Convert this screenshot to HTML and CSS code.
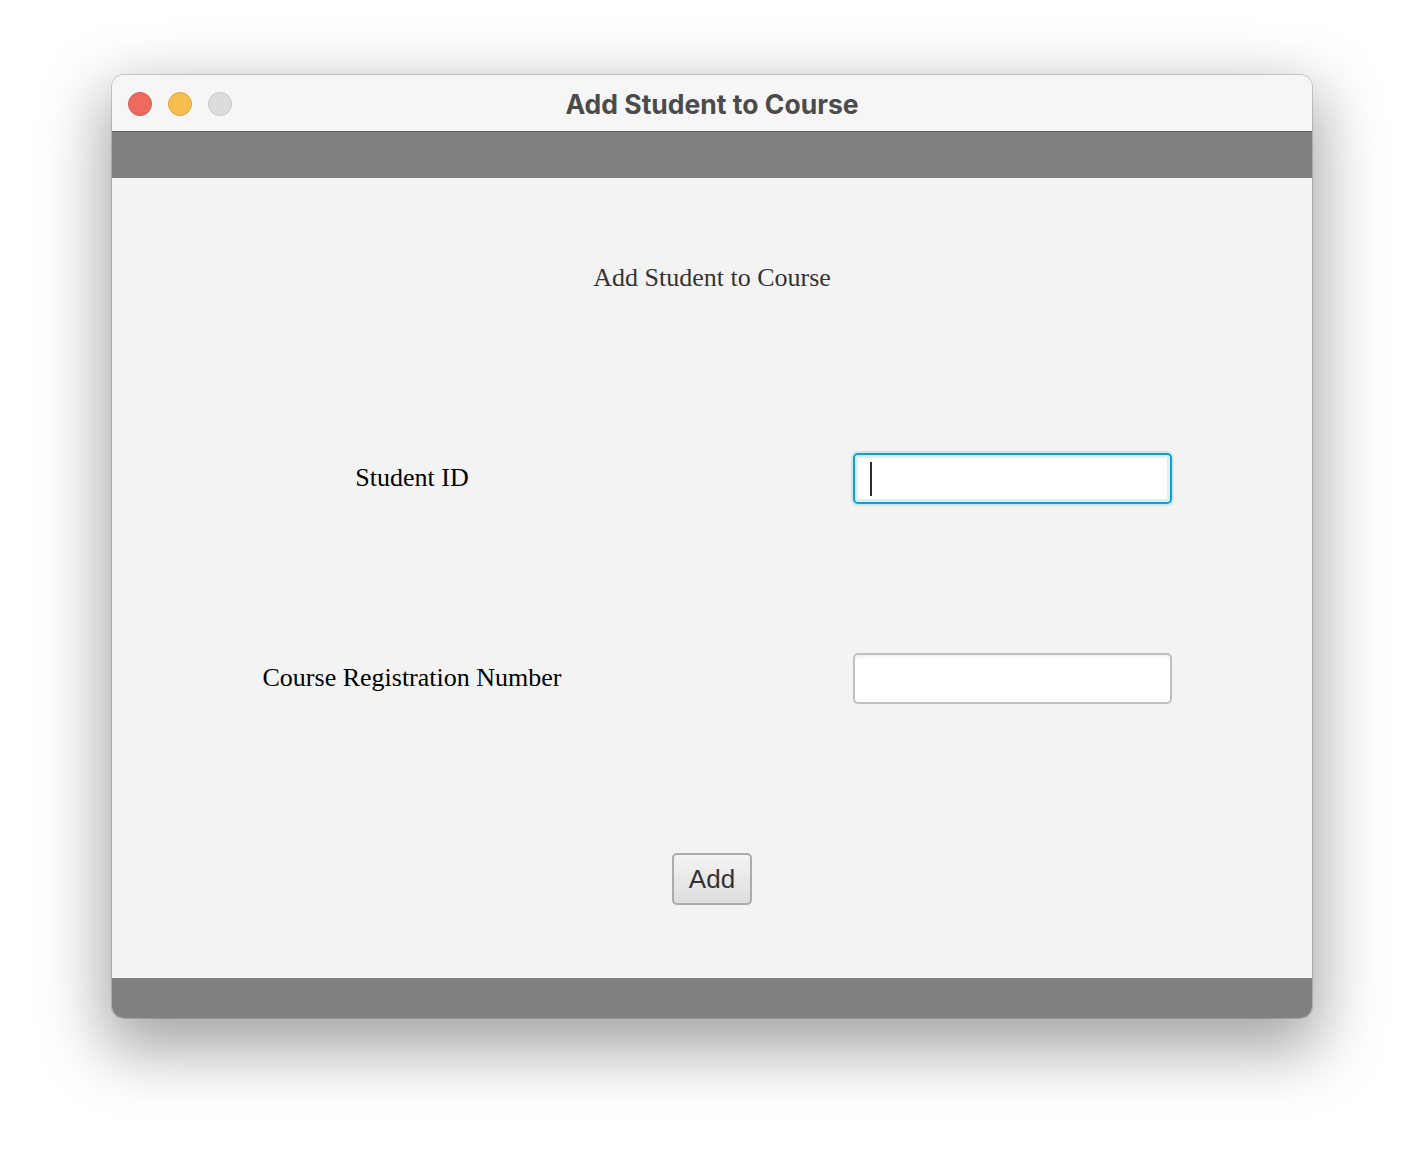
FILE: index.html
```html
<!DOCTYPE html>
<html>
<head>
<meta charset="utf-8">
<title>Add Student to Course</title>
<link rel="stylesheet" href="styles.css">
</head>
<body>
<div class="window">
  <div class="titlebar">
    <div class="lights">
      <span class="light red"></span>
      <span class="light yellow"></span>
      <span class="light grey"></span>
    </div>
    <div class="title">Add Student to Course</div>
  </div>
  <div class="bar top"></div>
  <div class="content">
    <div class="heading">Add Student to Course</div>
    <div class="cell label">Student ID</div>
    <div class="cell"><div class="field focused"><span class="caret"></span></div></div>
    <div class="cell label">Course Registration Number</div>
    <div class="cell"><div class="field"></div></div>
    <div class="actions"><button class="btn">Add</button></div>
  </div>
  <div class="bar bottom"></div>
</div>
</body>
</html>
```
FILE: styles.css
```css
html, body {
  margin: 0;
  padding: 0;
  background: #ffffff;
}
body {
  padding: 75px 0 0 112px;
  height: 1166px;
  box-sizing: border-box;
  overflow: hidden;
}
.window {
  width: 1200px;
  height: 943px;
  border-radius: 12px;
  overflow: hidden;
  display: flex;
  flex-direction: column;
  box-shadow: 0 0 0 1px rgba(0,0,0,0.16), 0 24px 64px 8px rgba(0,0,0,0.36);
  background: #f3f3f3;
}
.titlebar {
  height: 56px;
  background: #f6f6f6;
  border-bottom: 1px solid #5f5f5f;
  display: flex;
  align-items: center;
  justify-content: center;
  position: relative;
}
.lights {
  position: absolute;
  left: 16px;
  top: 17px;
  display: flex;
  gap: 16px;
}
.light {
  width: 24px;
  height: 24px;
  border-radius: 50%;
  box-sizing: border-box;
}
.red { background: #ee6a5f; border: 1px solid #d9554b; }
.yellow { background: #f6be4f; border: 1px solid #dea33a; }
.grey { background: #dcdcdc; border: 1px solid #c5c5c5; }
.title {
  font-family: Inter, "Liberation Sans", sans-serif;
  font-weight: 700;
  font-size: 26.5px;
  color: #4b4b4b;
  margin-top: 1px;
}
.bar {
  background: #808080;
}
.bar.top { height: 46px; }
.bar.bottom { height: 40px; }
.content {
  height: 800px;
  display: grid;
  grid-template-columns: 600px 600px;
  grid-template-rows: repeat(4, 200px);
  background: #f3f3f3;
}
.heading {
  grid-column: 1 / 3;
  display: flex;
  align-items: center;
  justify-content: center;
  font-family: "Liberation Serif", serif;
  font-size: 26px;
  color: #333333;
}
.cell {
  display: flex;
  align-items: center;
  justify-content: center;
}
.label {
  font-family: "Liberation Serif", serif;
  font-size: 26px;
  color: #000000;
}
.field {
  width: 319px;
  height: 51px;
  box-sizing: border-box;
  border-radius: 5px;
  background: #ffffff;
  border: 2px solid #c0c0c0;
  box-shadow: inset 0 4px 4px -2px rgba(0,0,0,0.06);
  position: relative;
}
.field.focused {
  border: 2px solid #0aa0d8;
  box-shadow: inset 0 0 0 3px #dcf0f9, 0 0 0 2px rgba(10,160,216,0.15);
}
.caret {
  position: absolute;
  left: 15px;
  top: 7px;
  width: 2px;
  height: 34px;
  background: #2c2c2c;
}
.actions {
  grid-column: 1 / 3;
  display: flex;
  align-items: center;
  justify-content: center;
}
.btn {
  width: 80px;
  height: 52px;
  box-sizing: border-box;
  border: 2px solid #ababab;
  border-radius: 5px;
  background: linear-gradient(#f3f3f3, #dedede);
  font-family: "Liberation Sans", Arial, sans-serif;
  font-size: 26px;
  color: #333333;
  padding: 0;
  margin-top: 2px;
}
```
